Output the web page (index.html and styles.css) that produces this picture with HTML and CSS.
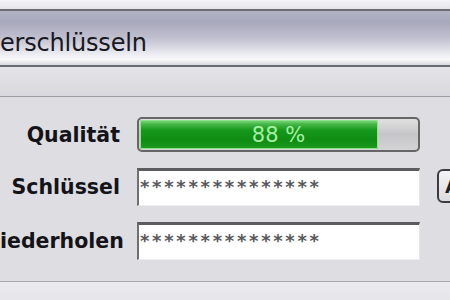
FILE: index.html
```html
<!DOCTYPE html>
<html lang="de">
<head>
<meta charset="utf-8">
<title>Verschlüsseln</title>
<link rel="stylesheet" href="styles.css">
</head>
<body>
<div class="window">
  <div class="topstrip"></div>
  <div class="titlebar"><span class="title">erschlüsseln</span></div>
  <div class="subbar"></div>
  <div class="form">
    <div class="label">Qualität</div>
    <div class="progress">
      <div class="fill" style="width: 86%"></div>
      <div class="ptext">88 %</div>
    </div>
    <div></div>

    <div class="label">Schlüssel</div>
    <div class="input">***************</div>
    <div class="btn">A</div>

    <div class="label label-cut">iederholen</div>
    <div class="input">***************</div>
    <div></div>
  </div>
  <div class="footer"></div>
</div>
</body>
</html>
```
FILE: styles.css
```css
html, body {
  margin: 0;
  padding: 0;
  width: 450px;
  height: 300px;
  overflow: hidden;
  background: #dcdce2;
}

.window {
  width: 450px;
  height: 300px;
  display: flex;
  flex-direction: column;
  font-family: "DejaVu Sans", sans-serif;
}

.topstrip {
  height: 9px;
  background: linear-gradient(#f4f4f6, #e6e6ea);
}

.titlebar {
  height: 36px;
  padding-top: 18px;
  border-top: 2px solid #6c6c74;
  border-bottom: 2px solid #6a6a72;
  background: linear-gradient(to bottom, #b4b4c6 0%, #a8a8bc 20%, #c0c0d0 50%, #ececf2 80%, #f8f8fa 90%, #d8d8e0 100%);
}

.title {
  display: block;
  font-size: 24px;
  line-height: 28px;
  letter-spacing: -0.2px;
  color: #18181e;
}

.subbar {
  height: 29px;
  background: linear-gradient(#e4e4e8, #d8d8de);
  border-bottom: 1px solid #9c9ca4;
}

.form {
  display: grid;
  grid-template-columns: 120px 283px 1fr;
  grid-template-rows: 35px 38px 38px;
  column-gap: 17px;
  row-gap: 16px;
  padding-top: 20px;
  padding-bottom: 21px;
  align-items: center;
  background: #dddde2;
}

.label {
  text-align: right;
  font-weight: bold;
  font-size: 20.5px;
  color: #141418;
  white-space: nowrap;
}

.label-cut {
  text-align: left;
}

.progress {
  position: relative;
  height: 35px;
  box-sizing: border-box;
  border: 2px solid #666;
  border-radius: 5px;
  padding: 1px;
  background: linear-gradient(#e0e0e0, #c6c6c8 50%, #d4d4d6);
  display: flex;
}

.fill {
  height: 100%;
  border-radius: 2px;
  background: linear-gradient(to bottom, #86dc86 0%, #48b848 14%, #16981a 35%, #0f8c12 70%, #1c9c20 100%);
  box-shadow: inset 0 0 0 1px #8ee48e;
}

.ptext {
  position: absolute;
  left: 0;
  right: 0;
  top: 0;
  bottom: 0;
  display: flex;
  align-items: center;
  justify-content: center;
  font-size: 21px;
  color: #a6f0a6;
}

.input {
  height: 38px;
  box-sizing: border-box;
  background: #fff;
  border-top: 3px solid #5c5c5e;
  border-left: 2px solid #707072;
  border-right: 1px solid #e6e6ea;
  border-bottom: 1px solid #eeeef0;
  padding-left: 1px;
  padding-bottom: 3px;
  display: flex;
  align-items: center;
  font-family: "DejaVu Sans", sans-serif;
  font-weight: bold;
  font-size: 18px;
  letter-spacing: 2.7px;
  color: #58585c;
  overflow: hidden;
  white-space: nowrap;
}

.btn {
  align-self: start;
  margin-top: 1px;
  height: 34px;
  width: 60px;
  box-sizing: border-box;
  border: 2px solid #3c3c40;
  border-radius: 6px;
  background: linear-gradient(#f4f4f6, #dcdce0);
  padding-left: 6px;
  display: flex;
  align-items: center;
  font-size: 18px;
  font-weight: bold;
  color: #202024;
  white-space: nowrap;
}

.footer {
  flex: 1;
  border-top: 1px solid #a8a8b0;
  background: linear-gradient(#ececf0, #e6e6ea);
}
```
